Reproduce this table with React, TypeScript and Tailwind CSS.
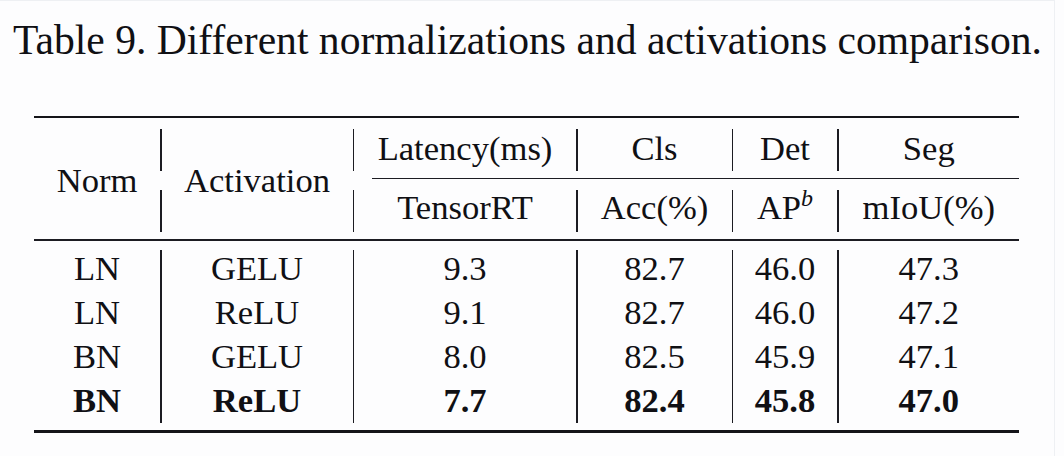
import React from "react";

const cols =
  "grid grid-cols-[126px_1.5px_191px_1.5px_222px_1.5px_154px_1.5px_104px_1.5px_1fr]";

function HBar() {
  return <div className="mt-[11px] h-[42px] w-[1.5px] bg-[#1c1c22]" />;
}

function Cell({ children }: { children: React.ReactNode }) {
  return <div className="text-center leading-[44.33px] whitespace-nowrap">{children}</div>;
}

const rows = [
  { n: "LN", a: "GELU", l: "9.3", c: "82.7", d: "46.0", s: "47.3", b: false },
  { n: "LN", a: "ReLU", l: "9.1", c: "82.7", d: "46.0", s: "47.2", b: false },
  { n: "BN", a: "GELU", l: "8.0", c: "82.5", d: "45.9", s: "47.1", b: false },
  { n: "BN", a: "ReLU", l: "7.7", c: "82.4", d: "45.8", s: "47.0", b: true },
];

function Col({ k }: { k: "n" | "a" | "l" | "c" | "d" | "s" }) {
  return (
    <div className="flex flex-col">
      {rows.map((r, i) => (
        <div
          key={i}
          className={
            "text-center leading-[44.33px] whitespace-nowrap " +
            (r.b ? "font-bold" : "font-normal")
          }
        >
          {r[k]}
        </div>
      ))}
    </div>
  );
}

function BBar() {
  return <div className="mt-[9.5px] h-[173px] w-[1.5px] bg-[#1c1c22]" />;
}

export default function App() {
  return (
    <div
      className="w-[1064px] h-[456px] bg-[#fdfdfe] text-[#101014] overflow-hidden"
      style={{ fontFamily: '"Liberation Serif", "Times New Roman", serif' }}
    >
      <div className="w-[1055px] h-[456px] border-t border-r border-[#eef0f3]">
        <div className="pl-[13px] pt-[15px] text-[41.6px] leading-[48px] whitespace-nowrap">
          Table 9. Different normalizations and activations comparison.
        </div>
        <div className="ml-[34px] mt-[52px] w-[985px] text-[34.6px]">
          <div className="h-[2px] bg-[#151519]" />
          {/* header */}
          <div className={cols + " grid-rows-[60px_1px_60px]"}>
            <div className="row-span-3 pt-[39.5px]">
              <Cell>Norm</Cell>
            </div>
            <HBar />
            <div className="row-span-3 pt-[39.5px]">
              <Cell>Activation</Cell>
            </div>
            <HBar />
            <div className="pt-[8.3px]">
              <Cell>Latency(ms)</Cell>
            </div>
            <HBar />
            <div className="pt-[8.3px]">
              <Cell>Cls</Cell>
            </div>
            <HBar />
            <div className="pt-[8.3px]">
              <Cell>Det</Cell>
            </div>
            <HBar />
            <div className="pt-[8.3px]">
              <Cell>Seg</Cell>
            </div>
            {/* midrule row */}
            <div className="col-start-2" />
            <div className="col-start-4" />
            <div className="col-start-5 col-end-12 ml-[18px] h-px bg-[#1c1c22]" />
            {/* row 3 */}
            <div className="col-start-2 row-start-3">
              <HBar />
            </div>
            <div className="col-start-4 row-start-3">
              <HBar />
            </div>
            <div className="col-start-5 row-start-3 pt-[6.3px]">
              <Cell>TensorRT</Cell>
            </div>
            <div className="col-start-6 row-start-3">
              <HBar />
            </div>
            <div className="col-start-7 row-start-3 pt-[6.3px]">
              <Cell>Acc(%)</Cell>
            </div>
            <div className="col-start-8 row-start-3">
              <HBar />
            </div>
            <div className="col-start-9 row-start-3 pt-[6.3px]">
              <Cell>
                AP<sup className="italic text-[24px] top-[-13px]">b</sup>
              </Cell>
            </div>
            <div className="col-start-10 row-start-3">
              <HBar />
            </div>
            <div className="col-start-11 row-start-3 pt-[6.3px]">
              <Cell>mIoU(%)</Cell>
            </div>
          </div>
          <div className="h-[1.5px] bg-[#1c1c22]" />
          {/* body */}
          <div className={cols + " h-[189.5px] pt-[5px]"}>
            <Col k="n" />
            <div className="-mt-[5px]">
              <BBar />
            </div>
            <Col k="a" />
            <div className="-mt-[5px]">
              <BBar />
            </div>
            <Col k="l" />
            <div className="-mt-[5px]">
              <BBar />
            </div>
            <Col k="c" />
            <div className="-mt-[5px]">
              <BBar />
            </div>
            <Col k="d" />
            <div className="-mt-[5px]">
              <BBar />
            </div>
            <Col k="s" />
          </div>
          <div className="h-[2.5px] bg-[#151519]" />
        </div>
      </div>
    </div>
  );
}
